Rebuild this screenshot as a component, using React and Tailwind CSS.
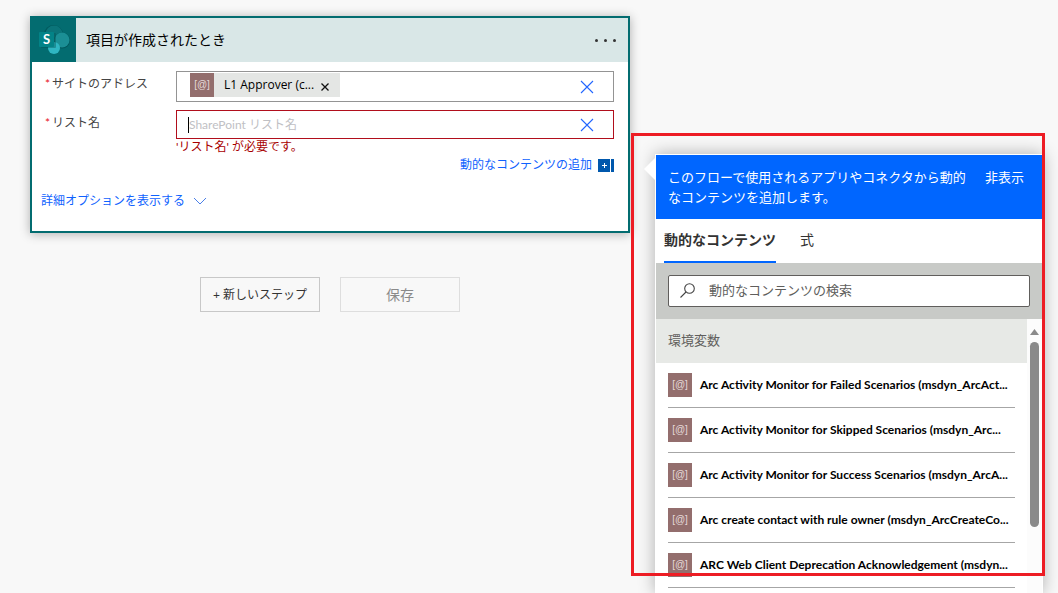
import React from 'react';

const variables = [
  'Arc Activity Monitor for Failed Scenarios (msdyn_ArcAct...',
  'Arc Activity Monitor for Skipped Scenarios (msdyn_Arc...',
  'Arc Activity Monitor for Success Scenarios (msdyn_ArcA...',
  'Arc create contact with rule owner (msdyn_ArcCreateCo...',
  'ARC Web Client Deprecation Acknowledgement (msdyn...',
];

function SharePointIcon() {
  return (
    <svg viewBox="0 0 44 44" className="size-11" aria-hidden="true">
      <circle cx="21.500" cy="16.500" r="9.500" fill="#02595d" />
      <circle cx="22" cy="16" r="8.500" fill="#0b7479" />
      <circle cx="30" cy="22.500" r="8" fill="#02595d" />
      <circle cx="30" cy="22" r="7.500" fill="#1b8f95" />
      <circle cx="22" cy="30" r="6" fill="#2fb6c2" />
      <rect x="9" y="15" width="15" height="15" rx="1" fill="#024f52" fillOpacity="0.4" />
      <rect x="7" y="14" width="15" height="15" rx="1" fill="#038387" />
      <text x="14.500" y="26" textAnchor="middle" fontSize="13" fontWeight="700" fill="#fff">S</text>
    </svg>
  );
}

function VariableIcon() {
  return (
    <span className="flex size-6 shrink-0 items-center justify-center bg-[#936e6d] pb-px font-['Liberation_Sans',sans-serif] text-[10px] leading-none font-normal text-[#e6dada]">
      [@]
    </span>
  );
}

function ClearButton({ label }) {
  return (
    <button type="button" aria-label={label} className="shrink-0">
      <svg viewBox="0 0 14 14" className="size-3.5" fill="none" stroke="#2266ff" strokeWidth="1.1">
        <path d="M1 1l12 12M13 1L1 13" />
      </svg>
    </button>
  );
}

function FieldLabel({ htmlFor, children }) {
  return (
    <label htmlFor={htmlFor} className="w-[131px] shrink-0 pt-[3px] leading-5 text-[#444]">
      <span className="mr-0.5 text-[#e81123]">*</span>
      {children}
    </label>
  );
}

function TriggerCard() {
  return (
    <section className="border-2 border-[#036c70] bg-white shadow-[0_1px_10px_rgba(0,0,0,0.3)]">
      <header className="flex h-11 items-center bg-[#d9e7e7]">
        <span className="shrink-0 bg-[#036c70]">
          <SharePointIcon />
        </span>
        <h1 className="flex-1 pl-2.5 text-sm text-black">項目が作成されたとき</h1>
        <button type="button" aria-label="メニュー" className="flex gap-1.5 pr-3">
          <span className="size-[3px] rounded-full bg-[#333]" />
          <span className="size-[3px] rounded-full bg-[#333]" />
          <span className="size-[3px] rounded-full bg-[#333]" />
        </button>
      </header>

      <div className="pt-[9px] pr-3.5 pb-5 pl-[9px] text-xs">
        <div className="flex flex-col gap-2 pl-1">
          <div className="flex">
            <FieldLabel htmlFor="site">サイトのアドレス</FieldLabel>
            <div className="flex h-[31px] min-w-0 flex-1 items-center border border-[#949494] pr-[19px] pl-[13px]">
              <span className="mt-px flex h-6 w-[150px] shrink-0 items-center self-start bg-[#e4e6e4] text-black">
                <VariableIcon />
                <span className="flex-1 pl-2.5 font-['Open_Sans',sans-serif]">L1 Approver (c...</span>
                <button type="button" aria-label="削除" className="pt-1 pr-2.5">
                  <svg viewBox="0 0 10 10" className="size-2.5" fill="none" stroke="#111" strokeWidth="1.3">
                    <path d="M1.500 1.500l7 7M8.500 1.500l-7 7" />
                  </svg>
                </button>
              </span>
              <input id="site" className="min-w-0 flex-1 outline-none" />
              <ClearButton label="サイトのアドレスをクリア" />
            </div>
          </div>

          <div className="flex">
            <FieldLabel htmlFor="list">リスト名</FieldLabel>
            <div className="min-w-0 flex-1">
              <div className="flex h-[29px] items-center border border-[#b10e1c] pr-[19px] pl-[11px]">
                <span className="h-4 w-px bg-black" />
                <input
                  id="list"
                  placeholder="SharePoint リスト名"
                  className="min-w-0 flex-1 outline-none placeholder:text-[#c0c0c4]"
                />
                <ClearButton label="リスト名をクリア" />
              </div>
              <p className="leading-4 text-[#a80000]">'リスト名' が必要です。</p>
              <div className="flex h-5 justify-end">
                <button type="button" className="flex items-center gap-1.5 text-[#0f62fe]">
                  動的なコンテンツの追加
                  <svg viewBox="0 0 16 13" className="h-[13px] w-4" aria-hidden="true">
                    <path d="M0 0h12v13H0zM13 0h3v13h-3z" fill="#0058ad" />
                    <path d="M4 6.500h5M6.500 4v5" stroke="#fff" />
                  </svg>
                </button>
              </div>
            </div>
          </div>
        </div>

        <button type="button" className="mt-4 flex h-5 items-center gap-2 text-[#0f62fe]">
          詳細オプションを表示する
          <svg viewBox="0 0 14 8" className="h-2 w-3.5" fill="none" stroke="#4a7fe8">
            <path d="M1 1l6 6 6-6" />
          </svg>
        </button>
      </div>
    </section>
  );
}

function DynamicContentPanel() {
  return (
    <aside className="relative mt-[154px] mr-[15px] ml-[25px] flex w-[388px] shrink-0 flex-col border border-b-0 border-white bg-white shadow-[0_0_16px_rgba(0,0,0,0.3)]">
      {/* callout arrow pointing back at the field */}
      <svg viewBox="0 0 12 24" className="absolute top-0.5 -left-3 h-6 w-3" aria-hidden="true">
        <path d="M12 0v24L0 12z" fill="#fff" />
      </svg>

      <div className="flex items-start gap-3 bg-[#0066ff] py-3 pr-[18px] pl-3 text-[13px] leading-5 text-white">
        <p className="flex-1">このフローで使用されるアプリやコネクタから動的なコンテンツを追加します。</p>
        <button type="button" className="shrink-0">非表示</button>
      </div>

      <div role="tablist" className="flex h-11 gap-6 px-2 text-sm text-[#333]">
        <button type="button" role="tab" aria-selected="true" className="border-b-2 border-[#0066ff] font-bold">
          動的なコンテンツ
        </button>
        <button type="button" role="tab" aria-selected="false" className="border-b-2 border-transparent">
          式
        </button>
      </div>

      <div className="bg-[#c8cac7] p-3">
        <label className="flex h-8 items-center rounded-xs border border-[#605e5c] bg-white">
          <svg viewBox="0 0 16 16" className="ml-[11px] size-4" fill="none" stroke="#444" strokeWidth="1.1">
            <circle cx="9.500" cy="5.500" r="4.800" />
            <path d="M6 9L0.500 14.500" />
          </svg>
          <input
            type="text"
            aria-label="動的なコンテンツの検索"
            placeholder="動的なコンテンツの検索"
            className="ml-[13px] min-w-0 flex-1 text-[13px] outline-none placeholder:text-[#605e5c]"
          />
        </label>
      </div>

      <div className="flex flex-1">
        <div className="min-w-0 flex-1">
          <h2 className="flex h-11 items-center bg-[#e7e9e6] px-3 text-[13px] text-[#605e5c]">環境変数</h2>
          <ul className="px-3">
            {variables.map((name) => (
              <li key={name} className="border-b border-[#a6a6a6]">
                <button type="button" className="flex h-11 w-full items-center gap-2 text-left text-xs font-bold text-black">
                  <VariableIcon />
                  <span className="whitespace-nowrap">{name}</span>
                </button>
              </li>
            ))}
          </ul>
        </div>
        <div className="flex w-[15px] flex-col items-center gap-[7px] bg-[#fcfcfc] pt-2.5">
          <svg viewBox="0 0 9 6" className="h-1.5 w-[9px]" aria-hidden="true">
            <path d="M4.500 0L9 6H0z" fill="#8a8a8a" />
          </svg>
          <span className="h-[185px] w-[9px] rounded-full bg-[#8a8a8a]" />
        </div>
      </div>

      {/* red highlight frame */}
      <div className="pointer-events-none absolute -top-[22px] -right-[3px] -left-[25px] h-[443px] border-3 border-[#ed1c24]" />
    </aside>
  );
}

export default function App() {
  return (
    <main className="flex min-h-screen overflow-hidden bg-[#f8f8f8] font-['Lato','Noto_Sans_CJK_JP',sans-serif]">
      <div className="min-w-0 flex-1 pt-4 pl-[30px]">
        <TriggerCard />
        <div className="mt-11 flex justify-center gap-5 text-[#333]">
          <button type="button" className="h-[35px] w-[120px] border border-[#c8c8c8] text-xs">
            + 新しいステップ
          </button>
          <button type="button" disabled className="h-[35px] w-[120px] border border-[#dedede] text-sm text-[#8a8a8a]">
            保存
          </button>
        </div>
      </div>
      <DynamicContentPanel />
    </main>
  );
}
